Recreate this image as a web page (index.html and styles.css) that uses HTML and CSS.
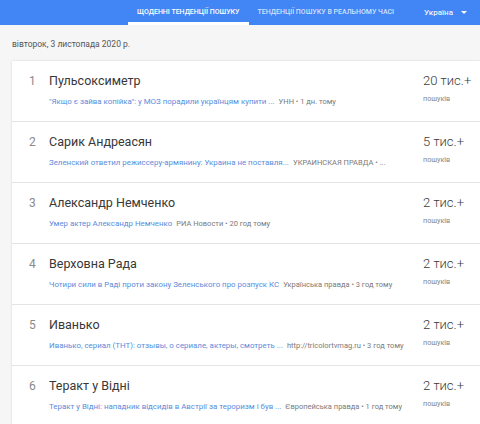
FILE: index.html
```html
<!DOCTYPE html>
<html lang="uk">
<head>
<meta charset="utf-8">
<link rel="stylesheet" href="styles.css">
</head>
<body>
<header class="topbar">
  <nav class="tabs">
    <a class="tab active">Щоденні тенденції пошуку</a>
    <a class="tab">Тенденції пошуку в реальному часі</a>
  </nav>
  <div class="country">Україна <span class="caret"></span></div>
</header>
<div class="date">вівторок, 3 листопада 2020 р.</div>
<section class="card">
  <div class="row">
    <div class="num">1</div>
    <div class="main">
      <div class="title">Пульсоксиметр</div>
      <div class="sub"><span class="link">"Якщо є зайва копійка": у МОЗ порадили українцям купити ...</span><span class="src">УНН • 1 дн. тому</span></div>
    </div>
    <div class="count"><div class="big">20 тис.+</div><div class="small">пошуків</div></div>
  </div>
  <div class="row">
    <div class="num">2</div>
    <div class="main">
      <div class="title">Сарик Андреасян</div>
      <div class="sub"><span class="link">Зеленский ответил режиссеру-армянину: Украина не поставля...</span><span class="src">УКРАИНСКАЯ ПРАВДА • ...</span></div>
    </div>
    <div class="count"><div class="big">5 тис.+</div><div class="small">пошуків</div></div>
  </div>
  <div class="row">
    <div class="num">3</div>
    <div class="main">
      <div class="title">Александр Немченко</div>
      <div class="sub"><span class="link">Умер актер Александр Немченко</span><span class="src">РИА Новости • 20 год тому</span></div>
    </div>
    <div class="count"><div class="big">2 тис.+</div><div class="small">пошуків</div></div>
  </div>
  <div class="row">
    <div class="num">4</div>
    <div class="main">
      <div class="title">Верховна Рада</div>
      <div class="sub"><span class="link">Чотири сили в Раді проти закону Зеленського про розпуск КС</span><span class="src">Українська правда • 3 год тому</span></div>
    </div>
    <div class="count"><div class="big">2 тис.+</div><div class="small">пошуків</div></div>
  </div>
  <div class="row">
    <div class="num">5</div>
    <div class="main">
      <div class="title">Иванько</div>
      <div class="sub"><span class="link">Иванько, сериал (ТНТ): отзывы, о сериале, актеры, смотреть ...</span><span class="src">http://tricolortvmag.ru • 3 год тому</span></div>
    </div>
    <div class="count"><div class="big">2 тис.+</div><div class="small">пошуків</div></div>
  </div>
  <div class="row">
    <div class="num">6</div>
    <div class="main">
      <div class="title">Теракт у Відні</div>
      <div class="sub"><span class="link">Теракт у Відні: нападник відсидів в Австрії за тероризм і був ...</span><span class="src">Європейська правда • 1 год тому</span></div>
    </div>
    <div class="count"><div class="big">2 тис.+</div><div class="small">пошуків</div></div>
  </div>
</section>
</body>
</html>
```

FILE: styles.css
```css
html, body {
  margin: 0;
  padding: 0;
}
body {
  background: #f6f6f6;
  font-family: Roboto, "Noto Sans", sans-serif;
  width: 480px;
  height: 424px;
  overflow: hidden;
}
.topbar {
  height: 25px;
  background: #4285f4;
  display: flex;
  align-items: stretch;
  color: #fff;
}
.tabs {
  display: flex;
  margin-left: 128px;
}
.tab {
  display: flex;
  align-items: center;
  padding: 0 9px;
  font-size: 7px;
  font-weight: 500;
  text-transform: uppercase;
  color: rgba(255,255,255,0.78);
  border-bottom: 3px solid transparent;
  padding-top: 2px;
  white-space: nowrap;
}
.tab.active {
  color: #fff;
  border-bottom-color: #fff;
}
.country {
  display: flex;
  align-items: center;
  margin-left: 21px;
  font-size: 8px;
  font-weight: 500;
  gap: 6px;
  color: rgba(255,255,255,0.92);
}
.caret {
  width: 0;
  height: 0;
  border-left: 3px solid transparent;
  border-right: 3px solid transparent;
  border-top: 3px solid #fff;
  margin-left: 2px;
}
.date {
  padding: 13px 0 11px 12px;
  font-size: 8.5px;
  line-height: 12px;
  color: #555;
}
.card {
  margin-left: 12px;
  background: #fff;
  box-shadow: 0 0 2px rgba(0,0,0,0.15);
}
.row {
  display: flex;
  height: 60px;
  border-bottom: 1px solid #e4e4e4;
  box-sizing: content-box;
}
.num {
  width: 37px;
  padding-left: 17px;
  box-sizing: border-box;
  padding-top: 12px;
  font-size: 12px;
  line-height: 16px;
  color: #8a8a8a;
}
.main {
  flex: 1;
  padding-top: 12px;
  min-width: 0;
}
.title {
  font-size: 12.5px;
  line-height: 16px;
  color: #383838;
}
.sub {
  margin-top: 4px;
  line-height: 12px;
  white-space: nowrap;
}
.link {
  font-size: 7.9px;
  color: #5a8cdb;
}
.src {
  font-size: 7.5px;
  color: #7a7a7a;
  margin-left: 4px;
}
.count {
  width: 57px;
  padding-top: 12px;
}
.big {
  font-size: 13px;
  line-height: 16px;
  font-weight: 300;
  color: #3a3a3a;
}
.small {
  margin-top: 4px;
  font-size: 7.2px;
  line-height: 12px;
  color: #858585;
}
```
